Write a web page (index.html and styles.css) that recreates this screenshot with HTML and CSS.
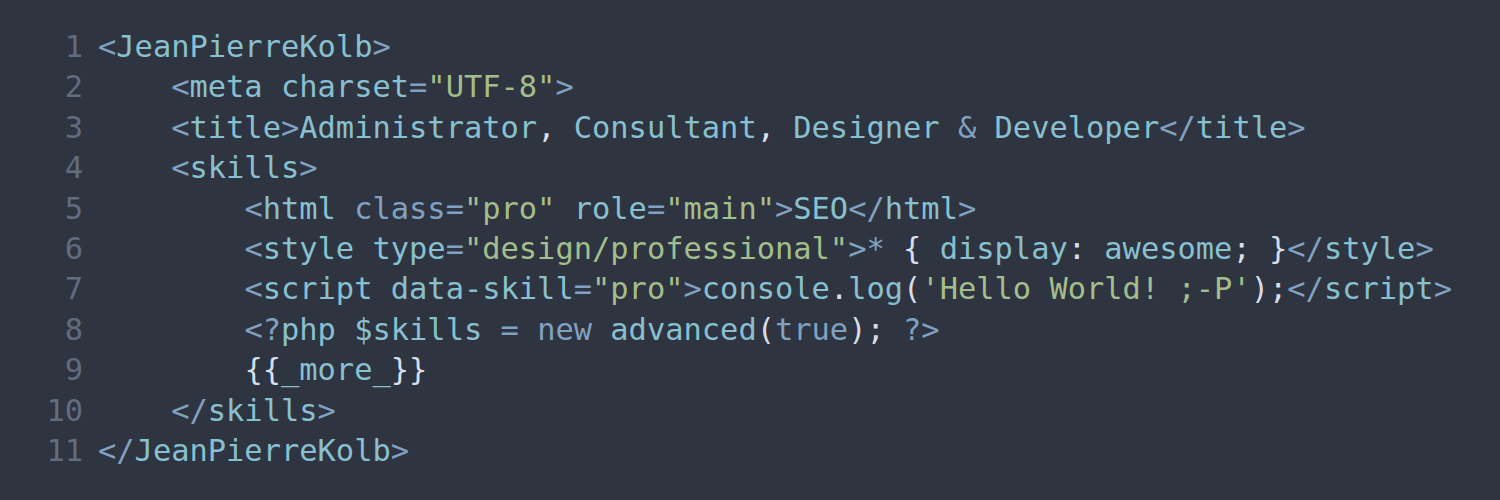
FILE: index.html
```html
<!DOCTYPE html>
<html lang="en">
<head>
<meta charset="UTF-8">
<title>JeanPierreKolb</title>
<link rel="stylesheet" href="styles.css">
</head>
<body>
<div class="editor">
  <div class="gutter">
    <div class="ln">1</div>
    <div class="ln">2</div>
    <div class="ln">3</div>
    <div class="ln">4</div>
    <div class="ln">5</div>
    <div class="ln">6</div>
    <div class="ln">7</div>
    <div class="ln">8</div>
    <div class="ln">9</div>
    <div class="ln">10</div>
    <div class="ln">11</div>
  </div>
  <div class="code">
    <div class="line"><span class="p">&lt;</span><span class="t">JeanPierreKolb</span><span class="p">&gt;</span></div>
    <div class="line">    <span class="p">&lt;</span><span class="t">meta</span> <span class="t">charset</span><span class="p">=</span><span class="s">"UTF-8"</span><span class="p">&gt;</span></div>
    <div class="line">    <span class="p">&lt;</span><span class="t">title</span><span class="p">&gt;</span><span class="t">Administrator</span><span class="w">,</span> <span class="t">Consultant</span><span class="w">,</span> <span class="t">Designer</span> <span class="p">&amp;</span> <span class="t">Developer</span><span class="p">&lt;/</span><span class="t">title</span><span class="p">&gt;</span></div>
    <div class="line">    <span class="p">&lt;</span><span class="t">skills</span><span class="p">&gt;</span></div>
    <div class="line">        <span class="p">&lt;</span><span class="t">html</span> <span class="p">class</span><span class="p">=</span><span class="s">"pro"</span> <span class="t">role</span><span class="p">=</span><span class="s">"main"</span><span class="p">&gt;</span><span class="t">SEO</span><span class="p">&lt;/</span><span class="t">html</span><span class="p">&gt;</span></div>
    <div class="line">        <span class="p">&lt;</span><span class="t">style</span> <span class="t">type</span><span class="p">=</span><span class="s">"design/professional"</span><span class="p">&gt;*</span> <span class="w">{</span> <span class="t">display</span><span class="w">:</span> <span class="t">awesome</span><span class="w">;</span> <span class="w">}</span><span class="p">&lt;/</span><span class="t">style</span><span class="p">&gt;</span></div>
    <div class="line">        <span class="p">&lt;</span><span class="t">script</span> <span class="t">data-skill</span><span class="p">=</span><span class="s">"pro"</span><span class="p">&gt;</span><span class="t">console</span><span class="w">.</span><span class="t">log</span><span class="w">(</span><span class="s">'Hello World! ;-P'</span><span class="w">);</span><span class="p">&lt;/</span><span class="t">script</span><span class="p">&gt;</span></div>
    <div class="line">        <span class="p">&lt;?</span><span class="t">php</span> <span class="t">$skills</span> <span class="p">=</span> <span class="p">new</span> <span class="t">advanced</span><span class="w">(</span><span class="p">true</span><span class="w">);</span> <span class="p">?&gt;</span></div>
    <div class="line">        <span class="w">{{</span><span class="t">_more_</span><span class="w">}}</span></div>
    <div class="line">    <span class="p">&lt;/</span><span class="t">skills</span><span class="p">&gt;</span></div>
    <div class="line"><span class="p">&lt;/</span><span class="t">JeanPierreKolb</span><span class="p">&gt;</span></div>
  </div>
</div>
</body>
</html>
```
FILE: styles.css
```css
html, body {
  margin: 0;
  padding: 0;
  background: #2e3440;
  width: 1500px;
  height: 500px;
  overflow: hidden;
}

.editor {
  display: flex;
  padding: 27px 0 0 0;
  font-family: "DejaVu Sans Mono", "Liberation Mono", monospace;
  font-size: 30.4px;
  line-height: 40.4px;
  color: #d8dee9;
}

.gutter {
  width: 83px;
  text-align: right;
  color: #616c7e;
  padding-right: 15px;
}

.ln {
  height: 40.4px;
}

.line {
  height: 40.4px;
  white-space: pre;
}

.t { color: #88c0d0; }
.p { color: #81a1c1; }
.s { color: #a3be8c; }
.w { color: #d8dee9; }
```
